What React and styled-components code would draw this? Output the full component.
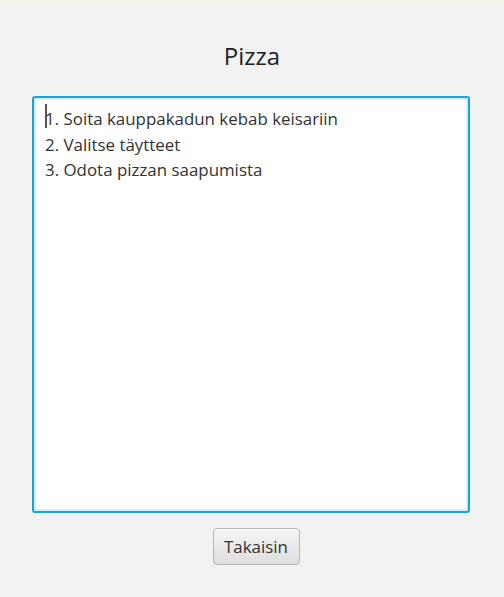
import React from "react";
import styled, { createGlobalStyle } from "styled-components";

const Global = createGlobalStyle`
  html, body { margin: 0; padding: 0; background: #f2f2f2; }
  body { font-family: "Open Sans", "Noto Sans", sans-serif; }
`;

const Window = styled.div`
  width: 504px;
  height: 597px;
  box-sizing: border-box;
  background: #f2f2f2;
  border-top: 2px solid #eef4e6;
  display: flex;
  flex-direction: column;
  align-items: center;
`;

const Title = styled.h1`
  margin: 34px 0 0;
  height: 40px;
  line-height: 40px;
  font-size: 24px;
  font-weight: 400;
  color: #222;
`;

const TextBox = styled.div`
  margin: 20px 34px 0 32px;
  align-self: stretch;
  height: 417px;
  box-sizing: border-box;
  border: 2px solid #1aa3d8;
  border-radius: 3px;
  box-shadow: inset 0 0 0 2px #d6edf8;
  background: #fff;
  padding: 8px 11px;
  position: relative;
`;

const Line = styled.div`
  font-size: 16.9px;
  line-height: 25.5px;
  color: #333;
  white-space: pre;
`;

const Caret = styled.span`
  position: absolute;
  left: 11px;
  top: 6px;
  width: 1.5px;
  height: 24px;
  background: #555;
`;

const Button = styled.button`
  margin: 15px 0 0 8px;
  width: 87px;
  height: 37px;
  box-sizing: border-box;
  border: 1px solid #b5b5b5;
  border-radius: 4px;
  background: linear-gradient(#f6f6f6, #dedede);
  box-shadow: inset 0 1px 0 #fff;
  font-family: "Open Sans", "Noto Sans", sans-serif;
  font-size: 16.9px;
  color: #333;
  padding: 0;
`;

const lines = [
  "1. Soita kauppakadun kebab keisariin",
  "2. Valitse täytteet",
  "3. Odota pizzan saapumista",
];

export default function App() {
  return (
    <>
      <Global />
      <Window>
        <Title>Pizza</Title>
        <TextBox>
          <Caret />
          {lines.map((l) => (
            <Line key={l}>{l}</Line>
          ))}
        </TextBox>
        <Button>Takaisin</Button>
      </Window>
    </>
  );
}
